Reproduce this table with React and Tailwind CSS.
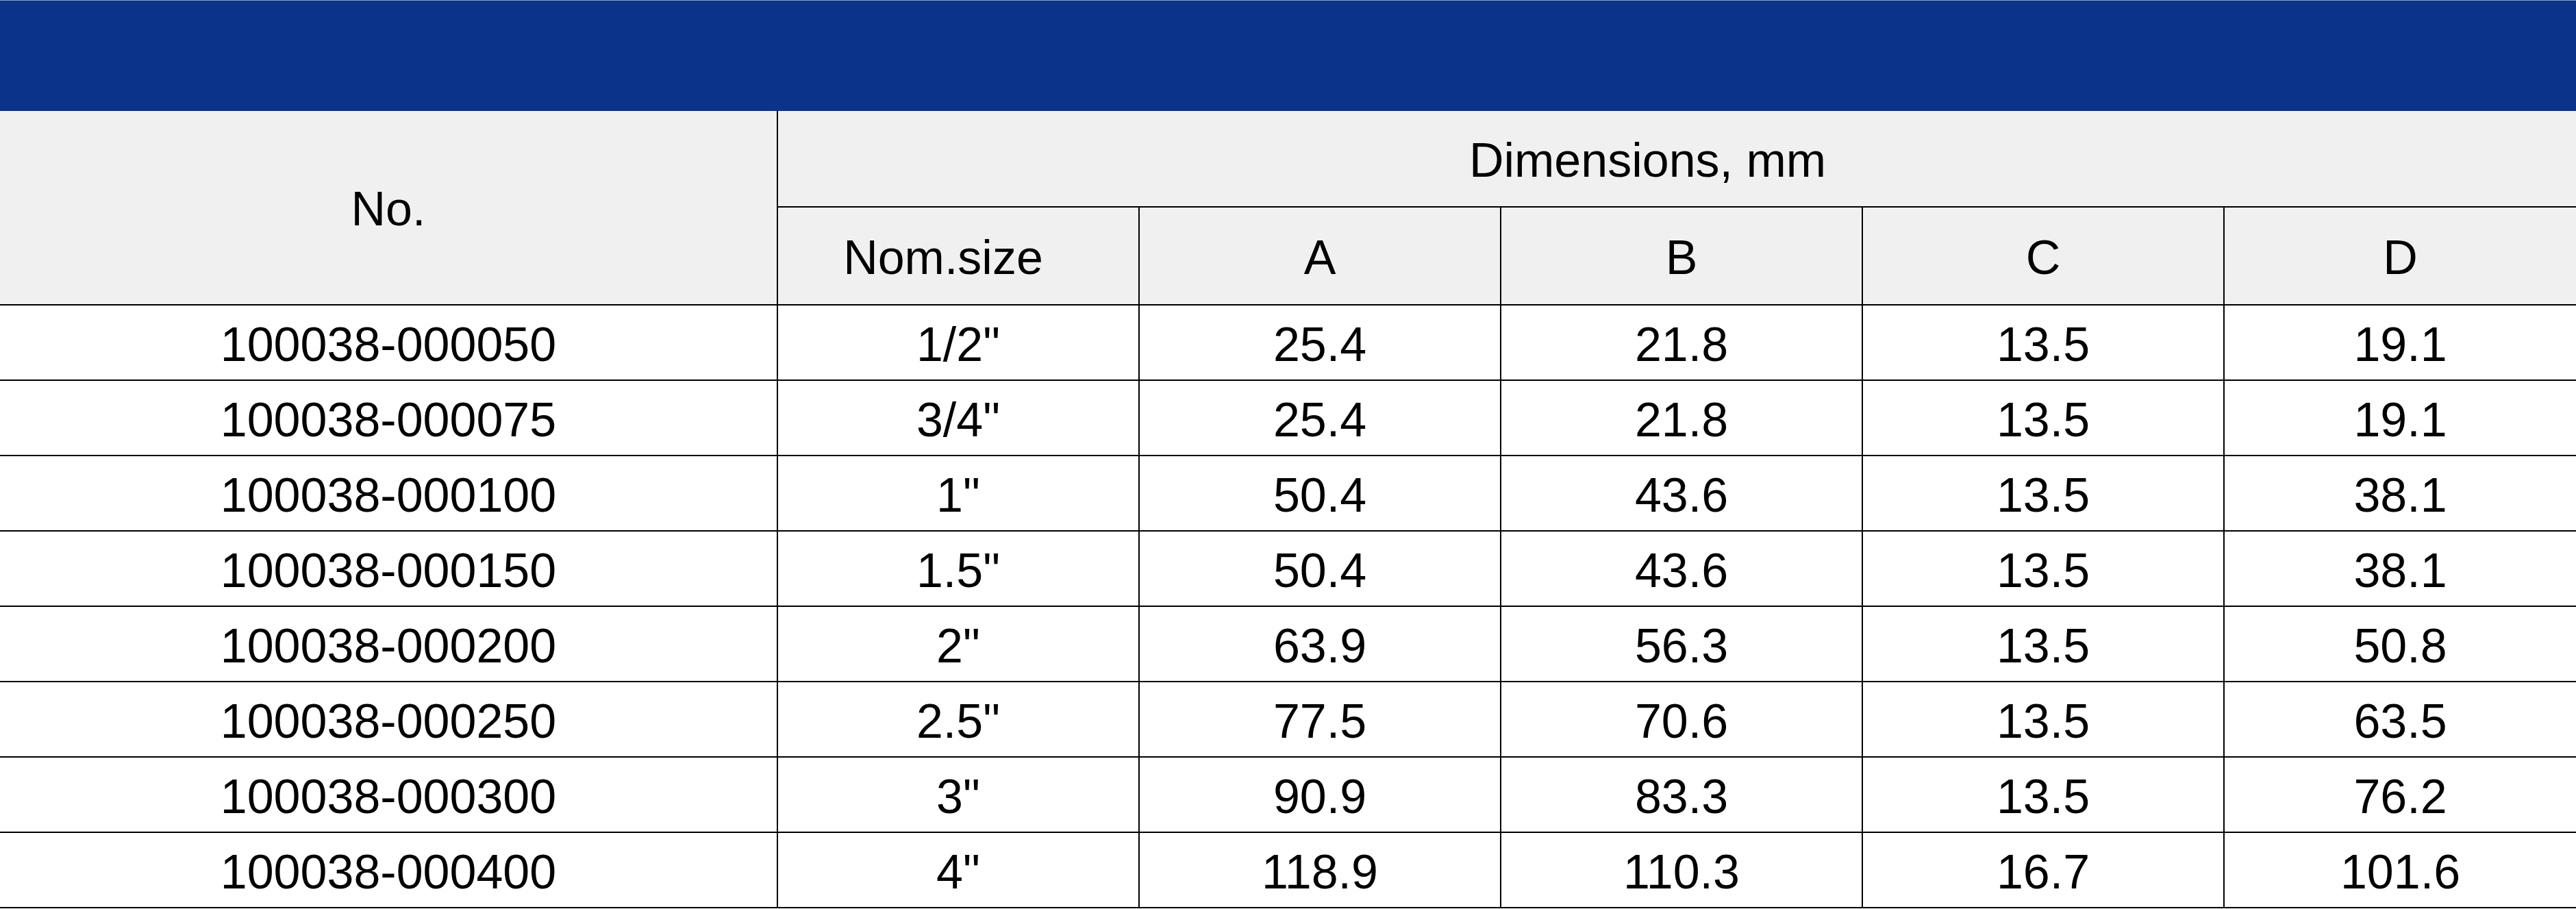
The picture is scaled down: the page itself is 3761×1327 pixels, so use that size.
import React from 'react';

const rows = [
  ['100038-000050', '1/2"', '25.4', '21.8', '13.5', '19.1'],
  ['100038-000075', '3/4"', '25.4', '21.8', '13.5', '19.1'],
  ['100038-000100', '1"', '50.4', '43.6', '13.5', '38.1'],
  ['100038-000150', '1.5"', '50.4', '43.6', '13.5', '38.1'],
  ['100038-000200', '2"', '63.9', '56.3', '13.5', '50.8'],
  ['100038-000250', '2.5"', '77.5', '70.6', '13.5', '63.5'],
  ['100038-000300', '3"', '90.9', '83.3', '13.5', '76.2'],
  ['100038-000400', '4"', '118.9', '110.3', '16.7', '101.6'],
];

const cols = 'grid grid-cols-[1136px_528px_528px_528px_528px_1fr]';

const App = () => {
  return (
    <div
      className="w-[3761px] h-[1327px] bg-white text-black text-[70px] leading-none overflow-hidden"
      style={{ fontFamily: '"Liberation Sans", Arial, sans-serif' }}
    >
      {/* Title bar */}
      <div className="h-[162px] bg-[#0b3388] border-t border-[#8c9dc4]" />

      {/* Header */}
      <div className={`${cols} grid-rows-[141px_141px] bg-[#f0f0f0] border-b-2 border-black`}>
        <div className="row-span-2 flex items-center justify-center border-r-2 border-black pt-[4px]">
          No.
        </div>
        <div className="col-span-5 flex items-center justify-center border-b-2 border-black pr-[86px] pt-[4px]">
          Dimensions, mm
        </div>
        <div className="flex items-center justify-center border-r-2 border-black pr-[44px] pt-[4px]">
          Nom.size
        </div>
        <div className="flex items-center justify-center border-r-2 border-black pt-[4px]">A</div>
        <div className="flex items-center justify-center border-r-2 border-black pt-[4px]">B</div>
        <div className="flex items-center justify-center border-r-2 border-black pt-[4px]">C</div>
        <div className="flex items-center justify-center pt-[4px]">D</div>
      </div>

      {/* Body */}
      {rows.map((row) => (
        <div key={row[0]} className={`${cols} h-[110px] border-b-2 border-black`}>
          {row.map((cell, i) => (
            <div
              key={i}
              className={`flex items-center justify-center pt-[6px] ${i < 5 ? 'border-r-2 border-black' : ''}`}
            >
              {cell}
            </div>
          ))}
        </div>
      ))}
    </div>
  );
};

export default App;
